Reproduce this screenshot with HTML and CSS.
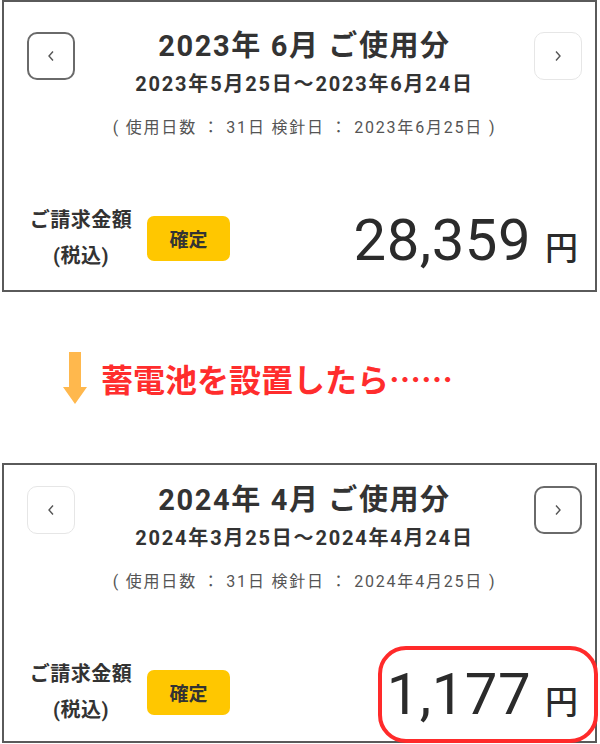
FILE: index.html
```html
<!DOCTYPE html>
<html lang="ja">
<head>
    <meta charset="UTF-8">
    <meta name="viewport" content="width=device-width, initial-scale=1.0">
    <title>ご使用量のお知らせ</title>
    <link rel="stylesheet" href="styles.css">
</head>
<body>
    <section class="card card--before">
        <div class="head">
            <button class="nav nav--active" aria-label="前月">
                <svg width="8" height="12" viewBox="0 0 8 12"><path d="M6 1.5L2 6l4 4.5" /></svg>
            </button>
            <div class="period">
                <h1 class="period-title">2023年 6月 ご使用分</h1>
                <p class="period-range">2023年5月25日〜2023年6月24日</p>
            </div>
            <button class="nav" aria-label="翌月">
                <svg width="8" height="12" viewBox="0 0 8 12"><path d="M2 1.5L6 6l-4 4.5" /></svg>
            </button>
        </div>
        <p class="meter">( 使用日数 ： 31日 検針日 ： 2023年6月25日 )</p>
        <div class="bill">
            <div class="bill-label">ご請求金額<br>(税込)</div>
            <span class="badge">確定</span>
            <div class="amount">
                <span class="amount-num">28,359</span>
                <span class="yen">円</span>
            </div>
        </div>
    </section>

    <div class="divider">
        <svg class="arrow" width="24" height="52" viewBox="0 0 24 52">
            <path d="M6 0h12v35h6L12 52 0 35h6z" />
        </svg>
        <p class="divider-text">蓄電池を設置したら……</p>
    </div>

    <section class="card card--after">
        <div class="head">
            <button class="nav" aria-label="前月">
                <svg width="8" height="12" viewBox="0 0 8 12"><path d="M6 1.5L2 6l4 4.5" /></svg>
            </button>
            <div class="period">
                <h1 class="period-title">2024年 4月 ご使用分</h1>
                <p class="period-range">2024年3月25日〜2024年4月24日</p>
            </div>
            <button class="nav nav--active" aria-label="翌月">
                <svg width="8" height="12" viewBox="0 0 8 12"><path d="M2 1.5L6 6l-4 4.5" /></svg>
            </button>
        </div>
        <p class="meter">( 使用日数 ： 31日 検針日 ： 2024年4月25日 )</p>
        <div class="bill">
            <div class="bill-label">ご請求金額<br>(税込)</div>
            <span class="badge">確定</span>
            <div class="amount amount--marked">
                <span class="amount-num">1,177</span>
                <span class="yen">円</span>
            </div>
        </div>
    </section>
</body>
</html>
```

FILE: styles.css
```css
body {
    margin: 0;
    background: #fff;
    color: #333;
    font-family: Roboto, "Noto Sans CJK JP", sans-serif;
    overflow: hidden;
}
p, h1 { margin: 0; }

.card {
    margin: 0 3px 0 2px;
    border: 2px solid #5a5a5a;
    background: #fff;
    padding: 30px 13px 27px 23px;
}
.card--after {
    padding-top: 21px;
    padding-bottom: 24px;
}

.head {
    display: flex;
    align-items: flex-start;
}
.nav {
    width: 48px;
    height: 48px;
    flex: none;
    display: flex;
    align-items: center;
    justify-content: center;
    background: #fff;
    border: 1.5px solid #e6e6e6;
    border-radius: 10px;
    padding: 0;
}
.nav--active { border: 2px solid #6a6a6a; }
.nav svg path {
    fill: none;
    stroke: #555;
    stroke-width: 1.4;
}
.period {
    flex: 1;
    text-align: center;
}
.period-title {
    font-size: 29px;
    line-height: 28px;
    font-weight: 700;
    letter-spacing: 1.6px;
    color: #333;
}
.period-range {
    margin-top: 12px;
    font-size: 20px;
    line-height: 24px;
    font-weight: 700;
    letter-spacing: 1.8px;
    color: #333;
}

.meter {
    margin-top: 22px;
    text-align: center;
    font-size: 16px;
    line-height: 20px;
    letter-spacing: 1.8px;
    color: #555;
}

.bill {
    margin-top: 75px;
    height: 50px;
    display: flex;
    align-items: center;
    padding-right: 4px;
}
.bill-label {
    width: 108px;
    text-align: center;
    font-size: 20px;
    line-height: 36px;
    font-weight: 700;
    letter-spacing: 0.5px;
    color: #333;
}
.badge {
    margin-left: 12px;
    width: 83px;
    height: 45px;
    display: flex;
    align-items: center;
    justify-content: center;
    background: #ffc700;
    border-radius: 7px;
    font-size: 19px;
    font-weight: 700;
    color: #333;
}
.amount {
    margin-left: auto;
    display: flex;
    align-items: baseline;
    gap: 14px;
    position: relative;
    padding-top: 8px;
}
.amount-num {
    font-size: 58px;
    line-height: 50px;
    letter-spacing: 0.5px;
    color: #2b2b2b;
}
.yen {
    font-size: 33px;
    font-weight: 500;
    color: #2b2b2b;
}
.amount--marked::after {
    content: "";
    position: absolute;
    left: -9px;
    right: -20px;
    top: -15px;
    bottom: -19px;
    border: 4px solid #ff2a2a;
    border-radius: 28px;
}

.divider {
    height: 171px;
    display: flex;
    align-items: center;
    gap: 14px;
    padding-left: 63px;
}
.arrow { fill: #ffb84d; }
.divider-text {
    font-family: "Noto Sans CJK JP", sans-serif;
    font-size: 32px;
    font-weight: 700;
    color: #ff2d2d;
}
```
